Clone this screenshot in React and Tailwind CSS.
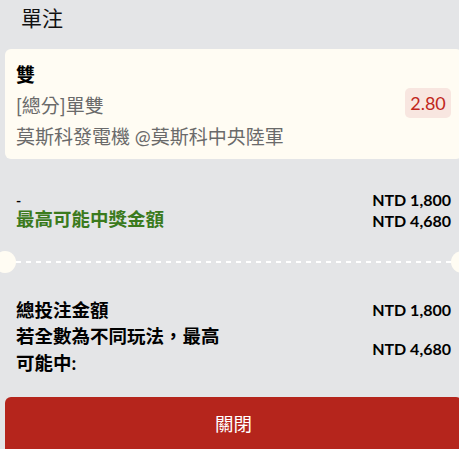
export default function App() {
  const font = "font-['Lato','Noto_Sans_CJK_TC',sans-serif]";
  return (
    <div className={`w-[459px] h-[449px] overflow-hidden bg-[#e4e5e7] ${font}`}>
      <div className="w-[467px] px-[5px]">
        <div className="h-[49px] pl-[16px] pt-[4px] text-[21px] leading-[28px] text-[#111]">單注</div>

        <div className="rounded-[6px] bg-[#fffcf3] px-[11px] pt-[10px] pb-[7px] flex items-center justify-between">
          <div className="flex flex-col text-[19px] leading-[31px]">
            <div className="font-bold text-black">雙</div>
            <div className="text-[#6a6a6a]">[總分]單雙</div>
            <div className="text-[#6a6a6a]">莫斯科發電機 @莫斯科中央陸軍</div>
          </div>
          <div className="mb-[5px] rounded-[5px] bg-[#f8e6e0] w-[46px] h-[30px] flex items-center justify-center text-[18px] text-[#c1261c]">
            2.80
          </div>
        </div>

        <div className="mt-[31px] px-[11px] flex flex-col">
          <div className="flex justify-between items-center h-[20px]">
            <span className="text-[14px] font-bold text-black">-</span>
            <span className="text-[16px] font-bold text-black">NTD 1,800</span>
          </div>
          <div className="flex justify-between items-center h-[22px]">
            <span className="text-[18.5px] font-bold text-[#3b7a1d] -mt-[2px]">最高可能中獎金額</span>
            <span className="text-[16px] font-bold text-black">NTD 4,680</span>
          </div>
        </div>

        <div className="mt-[19px] h-[22px] flex items-center">
          <div className="w-[22px] h-[22px] -ml-[11px] rounded-full bg-[#fffcf3] shrink-0"></div>
          <div className="flex-1 h-[2px] bg-[linear-gradient(to_right,#ffffff_50%,transparent_50%)] bg-[length:10px_2px]"></div>
          <div className="w-[22px] h-[22px] -mr-[11px] rounded-full bg-[#fffcf3] shrink-0"></div>
        </div>

        <div className="mt-[24px] px-[11px] flex flex-col text-black">
          <div className="flex justify-between items-center leading-[26px]">
            <span className="text-[18.5px] font-bold">總投注金額</span>
            <span className="text-[16px] font-bold">NTD 1,800</span>
          </div>
          <div className="flex justify-between items-center leading-[26.5px]">
            <span className="w-[212px] text-[18.5px] font-bold">若全數為不同玩法，最高可能中:</span>
            <span className="text-[16px] font-bold">NTD 4,680</span>
          </div>
        </div>

        <div className="mt-[21px] h-[56px] rounded-t-[6px] bg-[#b5251c] flex items-center justify-center text-white text-[18.5px]">
          關閉
        </div>
      </div>
    </div>
  );
}
